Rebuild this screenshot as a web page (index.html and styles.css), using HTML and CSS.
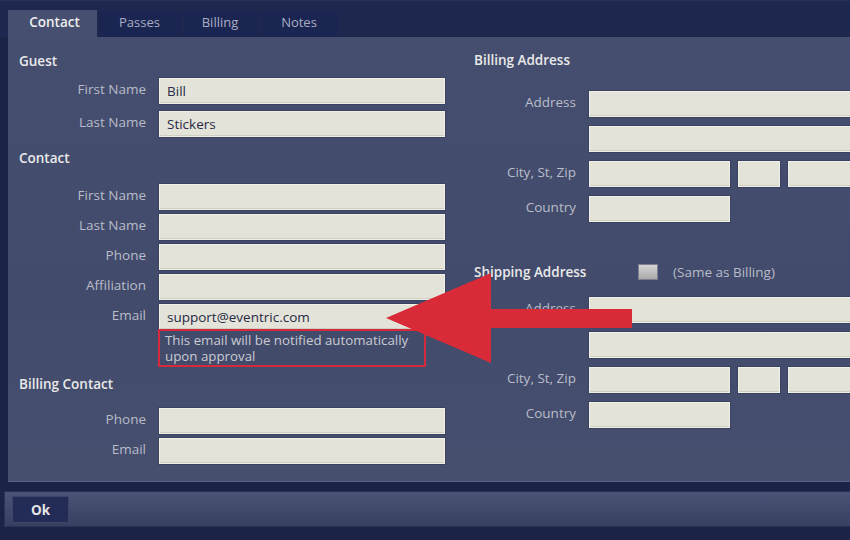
FILE: index.html
```html
<!DOCTYPE html>
<html>
<head>
<meta charset="utf-8">
<link rel="stylesheet" href="styles.css">
</head>
<body>
<div class="app">
  <div class="tabbar">
    <div class="tab active">Contact</div>
    <div class="tab t-passes">Passes</div>
    <div class="tab t-billing">Billing</div>
    <div class="tab t-notes">Notes</div>
  </div>
  <div class="panel">
    <div class="col left">
      <div class="heading h-guest">Guest</div>
      <div class="rows rows-guest">
        <div class="row"><span class="label">First Name</span><div class="input">Bill</div></div>
        <div class="row"><span class="label">Last Name</span><div class="input">Stickers</div></div>
      </div>
      <div class="heading h-contact">Contact</div>
      <div class="rows rows-contact">
        <div class="row"><span class="label">First Name</span><div class="input"></div></div>
        <div class="row"><span class="label">Last Name</span><div class="input"></div></div>
        <div class="row"><span class="label">Phone</span><div class="input"></div></div>
        <div class="row"><span class="label">Affiliation</span><div class="input"></div></div>
        <div class="row"><span class="label">Email</span><div class="input">support@eventric.com</div></div>
      </div>
      <div class="row note-row"><span class="label"></span><div class="note">This email will be notified automatically upon approval</div></div>
      <div class="heading h-billing">Billing Contact</div>
      <div class="rows rows-billing">
        <div class="row"><span class="label">Phone</span><div class="input"></div></div>
        <div class="row"><span class="label">Email</span><div class="input"></div></div>
      </div>
    </div>
    <div class="col right">
      <div class="heading h-baddr">Billing Address</div>
      <div class="rows rows-addr">
        <div class="row"><span class="label">Address</span><div class="input wide"></div></div>
        <div class="row"><span class="label"></span><div class="input wide"></div></div>
        <div class="row"><span class="label">City, St, Zip</span><div class="input city"></div><div class="input st"></div><div class="input zip"></div></div>
        <div class="row"><span class="label">Country</span><div class="input city"></div></div>
      </div>
      <div class="heading h-saddr"><span class="h-text">Shipping Address</span><span class="checkbox"></span><span class="same">(Same as Billing)</span></div>
      <div class="rows rows-addr rows-ship">
        <div class="row"><span class="label">Address</span><div class="input wide"></div></div>
        <div class="row"><span class="label"></span><div class="input wide"></div></div>
        <div class="row"><span class="label">City, St, Zip</span><div class="input city"></div><div class="input st"></div><div class="input zip"></div></div>
        <div class="row"><span class="label">Country</span><div class="input city"></div></div>
      </div>
    </div>
  </div>
  <div class="footer">
    <button class="ok">Ok</button>
  </div>
</div>
<svg class="arrow" width="850" height="540" viewBox="0 0 850 540">
  <polygon points="386,318 491,273 491,309 632,309 632,328 491,328 491,363" fill="#d92a37"/>
</svg>
</body>
</html>
```
FILE: styles.css
```css
html, body {
  margin: 0;
  padding: 0;
  overflow: hidden;
  width: 850px;
  height: 540px;
}
body {
  background: #1b2346;
  font-family: "Open Sans", "Noto Sans", sans-serif;
  position: relative;
}
.app {
  width: 850px;
  height: 540px;
  overflow: hidden;
}
.tabbar {
  height: 37px;
  background: #1e284e;
  border-top: 1px solid #283257;
  box-sizing: border-box;
  display: flex;
  align-items: flex-end;
  padding-left: 8px;
}
.tab {
  height: 26px;
  line-height: 23px;
  font-size: 13px;
  color: #a9adc2;
  text-align: center;
  box-sizing: border-box;
  background: #1b2552;
  border-left: 2px solid #1e284e;
}
.tab.active {
  width: 89px;
  background: #464f6f;
  color: #eeeeee;
  font-weight: 600;
  font-size: 13.5px;
  border-left: none;
  height: 27px;
  line-height: 25px;
  padding-left: 4px;
}
.t-passes { width: 85px; padding-right: 2px; }
.t-billing { width: 78px; padding-right: 4px; }
.t-notes { width: 78px; padding-right: 2px; }

.panel {
  margin-left: 8px;
  width: 900px;
  height: 445px;
  background: linear-gradient(180deg, #454e6e 0%, #424b6b 60%, #474f6f 100%);
  display: flex;
  box-sizing: border-box;
  border-bottom: 1px solid #5a6383;
}
.col.left {
  width: 437px;
  padding-left: 11px;
  box-sizing: border-box;
}
.col.right {
  margin-left: 29px;
  width: 420px;
}
.heading {
  font-size: 13.5px;
  font-weight: 600;
  color: #e9e9ea;
  line-height: 20px;
  height: 20px;
}
.h-guest { margin-top: 14px; }
.h-contact { margin-top: 11px; }
.h-billing { margin-top: 7px; }
.h-baddr { margin-top: 13px; }
.h-saddr { margin-top: 40px; display: flex; align-items: center; }
.rows { display: flex; flex-direction: column; }
.rows-guest { margin-top: 7px; gap: 7px; }
.rows-contact { margin-top: 16px; gap: 4px; }
.rows-billing { margin-top: 14px; gap: 4px; }
.rows-addr { margin-top: 21px; gap: 9px; }
.rows-ship { margin-top: 15px; }
.row {
  display: flex;
  align-items: flex-start;
  height: 26px;
}
.label {
  width: 127px;
  margin-right: 13px;
  text-align: right;
  font-size: 13.5px;
  color: #b9bcca;
  line-height: 20px;
  padding-top: 1px;
  flex: none;
}
.right .label { width: 102px; }
.input {
  width: 286px;
  height: 26px;
  box-sizing: border-box;
  background: #e4e3d9;
  border: 1px solid #f1f0e7;
  box-shadow: 0 0 0 1px #3a4262, inset 0 -1px 0 #cfcec3;
  font-size: 13.5px;
  color: #262a44;
  line-height: 24px;
  padding-left: 7px;
  flex: none;
}
.input.wide { width: 300px; }
.input.city { width: 141px; }
.input.st { width: 42px; margin-left: 8px; }
.input.zip { width: 100px; margin-left: 8px; }
.note-row {
  margin-top: -1px;
  height: 38px;
}
.note-row .label { margin-right: 12px; }
.note {
  width: 268px;
  height: 38px;
  box-sizing: border-box;
  border: 2px solid #d42a3b;
  font-size: 13.3px;
  line-height: 16px;
  color: #c9cad2;
  padding: 1px 0 0 5px;
  background: #434b6b;
}
.h-text { width: 164px; }
.checkbox {
  width: 20px;
  height: 16px;
  box-sizing: border-box;
  background: linear-gradient(180deg, #d4d4d4 0%, #a9a9ab 100%);
  border: 1px solid #7d7f8e;
  margin-right: 15px;
}
.same {
  font-weight: 400;
  color: #b9bcca;
}
.footer {
  margin-top: 9px;
  margin-left: 4px;
  width: 900px;
  height: 36px;
  box-sizing: border-box;
  background: linear-gradient(180deg, #4b5476 0%, #414a6b 50%, #384061 100%);
  border: 1px solid #2a3256;
  padding: 4px 7px;
}
.ok {
  display: block;
  width: 57px;
  height: 27px;
  background: #232c56;
  border: 1px solid #3d466a;
  color: #e6e6e6;
  font-family: "Open Sans", "Noto Sans", sans-serif;
  font-weight: 700;
  font-size: 13.5px;
  padding: 0;
  margin: 0;
}
.arrow {
  position: absolute;
  left: 0;
  top: 0;
  pointer-events: none;
}
```
